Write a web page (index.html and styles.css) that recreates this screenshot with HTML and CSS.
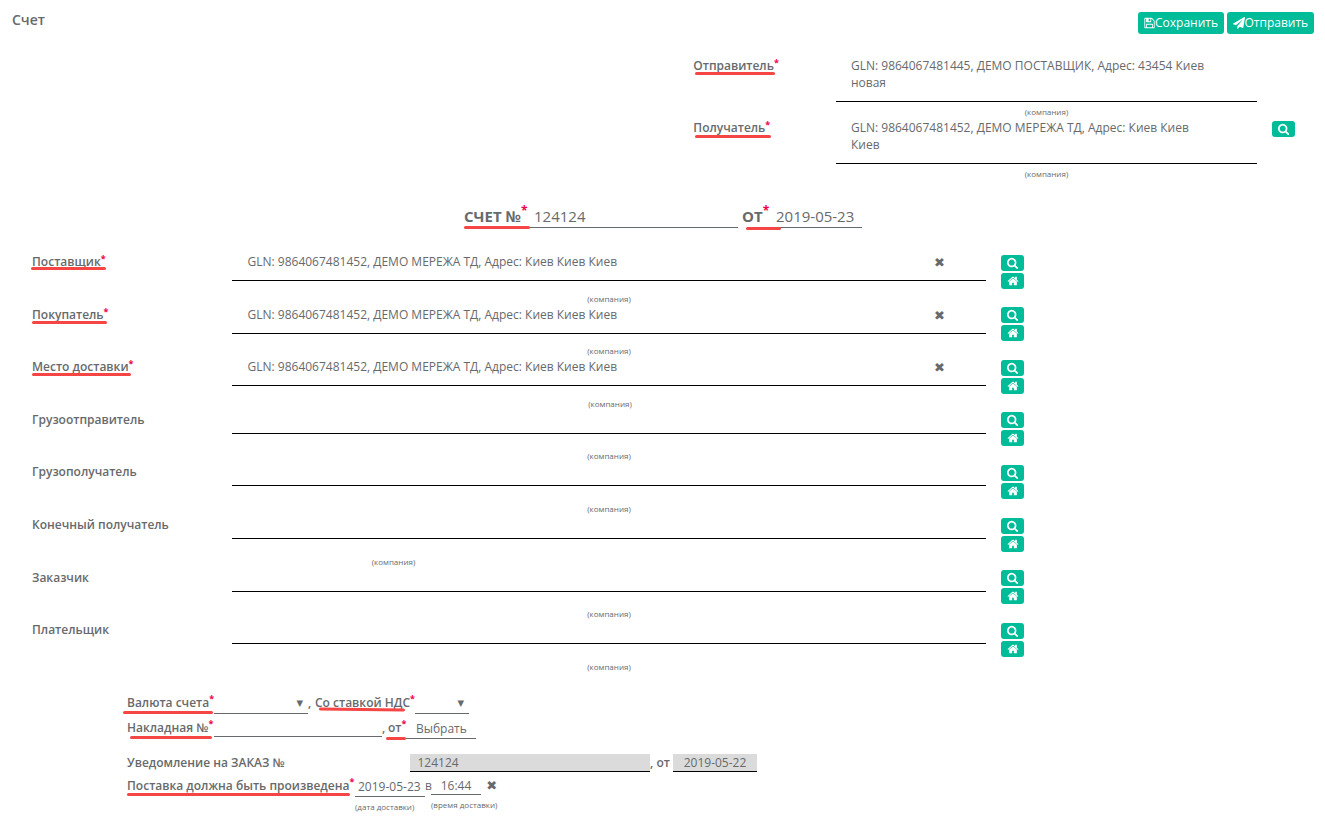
FILE: index.html
```html
<!DOCTYPE html>
<html lang="ru">
<head>
<meta charset="utf-8">
<title>Счет</title>
<link rel="stylesheet" href="styles.css">
</head>
<body>
<svg class="sprite" aria-hidden="true">
  <symbol id="search" viewBox="0 0 1792 1792"><path d="M1152 832q0-185-131.500-316.500t-316.500-131.500-316.500 131.500-131.500 316.500 131.500 316.500 316.500 131.500 316.500-131.500 131.500-316.500zm512 832q0 52-38 90t-90 38q-54 0-90-38l-343-342q-179 124-399 124-143 0-273.500-55.500t-225-150-150-225-55.500-273.500 55.500-273.500 150-225 225-150 273.500-55.500 273.500 55.500 225 150 150 225 55.500 273.500q0 220-124 399l343 343q37 37 37 90z"/></symbol>
  <symbol id="home" viewBox="0 0 1792 1792"><path d="M1472 992v480q0 26-19 45t-45 19h-384v-384h-256v384h-384q-26 0-45-19t-19-45v-480q0-1 .5-3t.5-3l575-474 575 474q1 2 1 6zm223-69l-62 74q-8 9-21 11h-3q-13 0-21-7l-692-577-692 577q-12 8-24 7-13-2-21-11l-62-74q-8-10-7-23.500t11-21.500l719-599q32-26 76-26t76 26l244 204v-195q0-14 9-23t23-9h192q14 0 23 9t9 23v408l219 182q10 8 11 21.500t-7 23.500z"/></symbol>
  <symbol id="plane" viewBox="0 0 1792 1792"><path d="M1764 11q33 24 27 64l-256 1536q-5 29-32 45-14 8-31 8-11 0-24-5l-453-185-242 295q-18 23-49 23-13 0-22-4-19-7-30.500-23.500t-11.500-36.500v-349l864-1059-1069 925-395-162q-37-14-40-55-2-40 32-59l1664-960q15-9 32-9 20 0 36 11z"/></symbol>
  <symbol id="save" viewBox="0 0 1792 1792"><path d="M512 1536h768v-384h-768v384zm896 0h128v-896q0-14-10-38.500t-20-34.500l-281-281q-10-10-34-20t-39-10v416q0 40-28 68t-68 28h-576q-40 0-68-28t-28-68v-416h-128v1280h128v-416q0-40 28-68t68-28h832q40 0 68 28t28 68v416zm-384-928v-320q0-13-9.500-22.500t-22.500-9.500h-192q-13 0-22.500 9.500t-9.500 22.500v320q0 13 9.500 22.500t22.500 9.500h192q13 0 22.500-9.500t9.500-22.500zm640 32v928q0 40-28 68t-68 28h-1344q-40 0-68-28t-28-68v-1344q0-40 28-68t68-28h928q40 0 88 20t76 48l280 280q28 28 48 76t20 88z"/></symbol>
</svg>

<header class="topbar">
  <h1 class="title">Счет</h1>
  <div class="actions">
    <button class="btn"><svg class="icon save"><use href="#save"/></svg>Сохранить</button>
    <button class="btn btn-send"><svg class="icon"><use href="#plane"/></svg>Отправить</button>
  </div>
</header>

<section class="parties">
  <div class="party">
    <div class="label"><span class="name mark m-sender">Отправитель<i class="req">*</i></span></div>
    <div class="field"><div class="value">GLN: 9864067481445, ДЕМО ПОСТАВЩИК, Адрес: 43454 Киев новая</div><div class="hint">(компания)</div></div>
  </div>
  <div class="party">
    <div class="label"><span class="name mark m-receiver">Получатель<i class="req">*</i></span></div>
    <div class="field"><div class="value">GLN: 9864067481452, ДЕМО МЕРЕЖА ТД, Адрес: Киев Киев Киев</div><div class="hint">(компания)</div></div>
    <div class="tools"><button class="mini"><svg class="icon"><use href="#search"/></svg></button></div>
  </div>
</section>

<section class="invoice">
  <span class="inv-label mark m-inv">СЧЕТ №<i class="req">*</i></span><span class="inv-input inv-number">124124</span>
  <span class="inv-label inv-from mark m-from">ОТ<i class="req">*</i></span><span class="inv-input inv-date">2019-05-23</span>
</section>

<section class="companies">
  <div class="row filled">
    <div class="label"><span class="name mark m-supplier">Поставщик<i class="req">*</i></span></div>
    <div class="field"><div class="value"><span>GLN: 9864067481452, ДЕМО МЕРЕЖА ТД, Адрес: Киев Киев Киев</span><span class="clear">✖</span></div><div class="hint">(компания)</div></div>
    <div class="tools"><button class="mini"><svg class="icon"><use href="#search"/></svg></button><button class="mini"><svg class="icon"><use href="#home"/></svg></button></div>
  </div>
  <div class="row filled">
    <div class="label"><span class="name mark m-buyer">Покупатель<i class="req">*</i></span></div>
    <div class="field"><div class="value"><span>GLN: 9864067481452, ДЕМО МЕРЕЖА ТД, Адрес: Киев Киев Киев</span><span class="clear">✖</span></div><div class="hint">(компания)</div></div>
    <div class="tools"><button class="mini"><svg class="icon"><use href="#search"/></svg></button><button class="mini"><svg class="icon"><use href="#home"/></svg></button></div>
  </div>
  <div class="row filled">
    <div class="label"><span class="name mark m-place">Место доставки<i class="req">*</i></span></div>
    <div class="field"><div class="value"><span>GLN: 9864067481452, ДЕМО МЕРЕЖА ТД, Адрес: Киев Киев Киев</span><span class="clear">✖</span></div><div class="hint hint-place">(компания)</div></div>
    <div class="tools"><button class="mini"><svg class="icon"><use href="#search"/></svg></button><button class="mini"><svg class="icon"><use href="#home"/></svg></button></div>
  </div>
  <div class="row">
    <div class="label">Грузоотправитель</div>
    <div class="field"><div class="value"></div><div class="hint">(компания)</div></div>
    <div class="tools"><button class="mini"><svg class="icon"><use href="#search"/></svg></button><button class="mini"><svg class="icon"><use href="#home"/></svg></button></div>
  </div>
  <div class="row">
    <div class="label">Грузополучатель</div>
    <div class="field"><div class="value"></div><div class="hint">(компания)</div></div>
    <div class="tools"><button class="mini"><svg class="icon"><use href="#search"/></svg></button><button class="mini"><svg class="icon"><use href="#home"/></svg></button></div>
  </div>
  <div class="row">
    <div class="label">Конечный получатель</div>
    <div class="field"><div class="value"></div><div class="hint hint-final">(компания)</div></div>
    <div class="tools"><button class="mini"><svg class="icon"><use href="#search"/></svg></button><button class="mini"><svg class="icon"><use href="#home"/></svg></button></div>
  </div>
  <div class="row">
    <div class="label">Заказчик</div>
    <div class="field"><div class="value"></div><div class="hint">(компания)</div></div>
    <div class="tools"><button class="mini"><svg class="icon"><use href="#search"/></svg></button><button class="mini"><svg class="icon"><use href="#home"/></svg></button></div>
  </div>
  <div class="row">
    <div class="label">Плательщик</div>
    <div class="field"><div class="value"></div><div class="hint">(компания)</div></div>
    <div class="tools"><button class="mini"><svg class="icon"><use href="#search"/></svg></button><button class="mini"><svg class="icon"><use href="#home"/></svg></button></div>
  </div>
</section>

<section class="details">
  <div class="line line-currency">
    <span class="name w-currency mark m-currency">Валюта счета<i class="req">*</i></span>
    <span class="select select-currency">▼</span>
    <span class="comma">,</span>
    <span class="name w-vat mark m-vat">Со ставкой НДС<i class="req">*</i></span>
    <span class="select select-vat">▼</span>
  </div>
  <div class="line line-waybill">
    <span class="name w-waybill mark m-waybill">Накладная №<i class="req">*</i></span>
    <span class="input input-waybill"></span>
    <span class="comma comma-waybill">,</span>
    <span class="name w-from mark m-waybill-from">от<i class="req">*</i></span>
    <span class="input input-pick">Выбрать</span>
  </div>
  <div class="line line-order">
    <span class="w-order">Уведомление на ЗАКАЗ №</span>
    <span class="locked locked-number">124124</span>
    <span class="order-from">, от</span>
    <span class="locked locked-date">2019-05-22</span>
  </div>
  <div class="line line-delivery">
    <span class="name w-delivery mark m-delivery">Поставка должна быть произведена<i class="req">*</i></span>
    <div class="stamp"><span class="input stamp-date">2019-05-23</span><span class="hint">(дата доставки)</span></div>
    <span class="in">в</span>
    <div class="stamp"><span class="input stamp-time">16:44</span><span class="hint">(время доставки)</span></div>
    <span class="clear clear-time">✖</span>
  </div>
</section>
</body>
</html>
```
FILE: styles.css
```css
* { box-sizing: border-box; }

body {
  margin: 0;
  width: 1325px;
  height: 820px;
  overflow: hidden;
  background: #fff;
  color: #676a6c;
  font: 12px/17px "Open Sans", "Noto Sans", "DejaVu Sans", sans-serif;
}

.sprite { display: none; }
.icon { display: block; width: 12px; height: 12px; fill: currentColor; flex: none; }

.topbar {
  display: flex;
  justify-content: space-between;
  align-items: flex-start;
  height: 57px;
  padding: 11px 11px 0 12px;
}
.title { margin: 0; font-size: 14px; line-height: 17px; font-weight: 600; }
.actions { display: flex; gap: 3px; padding-top: 1px; }
.btn {
  display: flex;
  align-items: center;
  width: 86px;
  height: 22px;
  padding: 0 0 2px 5px;
  border: 0;
  border-radius: 3px;
  background: #00bc98;
  color: #fff;
  font: inherit;
  white-space: nowrap;
}
.btn .icon { margin-top: 1px; }
.btn .save { width: 13px; margin-right: -1px; }
.btn-send { width: 87px; padding-left: 5.5px; }

.label { font-weight: 600; white-space: nowrap; }
.name { position: relative; display: inline-block; font-weight: 600; white-space: nowrap; }
.req { color: #f0004c; font-style: normal; font-weight: 700; font-size: 9px; line-height: 0; position: relative; top: -4px; }

/* Red strokes below the mandatory labels */
.mark { position: relative; }
.mark::after {
  content: "";
  position: absolute;
  left: 0;
  height: 3px;
  border-radius: 2px;
  background: #f54545;
}
.m-sender::after { left: 2px; top: 15px; width: 80px; }
.m-receiver::after { left: 2px; top: 16px; width: 76px; }
.m-inv::after { left: 0; top: 19px; width: 66px; }
.m-from::after { left: 4px; top: 20px; width: 35px; }
.m-supplier::after { left: -1px; top: 14px; width: 75px; }
.m-buyer::after { left: 0; top: 15px; width: 75px; }
.m-place::after { left: 0; top: 15px; width: 99px; }
.m-currency::after { left: -4px; top: 17px; width: 90px; }
.m-vat::after { left: 4px; top: 14px; width: 86px; transform: rotate(.7deg); }
.m-waybill::after { left: 3px; top: 17px; width: 82px; }
.m-waybill-from::after { left: -2px; top: 18px; width: 20px; }
.m-delivery::after { left: 0; top: 16px; width: 223px; }

.hint { font-size: 8px; line-height: 10px; font-weight: 400; text-align: center; white-space: nowrap; }

.party {
  display: grid;
  grid-template-columns: 142.7px 421px 23px;
  height: 62px;
  margin-left: 693.3px;
}
.party .value { height: 45px; padding: 0 50px 0 15px; border-bottom: 1px solid #000; }
.party .hint { padding-top: 5px; }
.party .tools { padding: 2px 0 0 15px; }

.mini {
  display: flex;
  justify-content: center;
  align-items: center;
  width: 23px;
  height: 16px;
  padding: 0 0 0 1px;
  border: 0;
  border-radius: 3px;
  background: #00bc98;
  color: #fff;
}

.invoice {
  display: flex;
  height: 72px;
  padding: 26px 0 0 464px;
  font-size: 15px;
  line-height: 18px;
  white-space: nowrap;
}
.inv-label { flex: none; width: 66px; height: 21px; font-weight: 700; }
.inv-label .req { font-size: 12px; top: -7px; }
.inv-from { width: 34px; margin-left: 4px; }
.inv-input { height: 21px; border-bottom: 1px solid #676a6c; }
.inv-number { width: 208px; padding-left: 4px; }
.inv-date { width: 86px; }

.companies { padding-left: 32px; }
.row {
  display: grid;
  grid-template-columns: 200px 754px 23px;
  height: 52.6px;
}
.row .value {
  display: flex;
  justify-content: space-between;
  height: 23px;
  padding: 0 41px 0 15.5px;
  border-bottom: 1px solid #000;
}
.row.filled .value { height: 28px; }
.row .hint { padding-top: 17.6px; }
.row.filled .hint { padding-top: 12.6px; }
.row .hint-final { padding-right: 431px; }
.row .hint-place { padding-left: 2px; }
.row .tools { display: flex; flex-direction: column; gap: 2px; padding: 1.7px 0 0 15px; }
.clear { font-family: "DejaVu Sans", sans-serif; font-size: 13px; }
.row .clear { padding-top: 1px; }

.details { padding: 20px 0 0 127px; }
.line { display: flex; white-space: nowrap; font-weight: 600; }
.line > * { flex: none; }
.line .req { top: -5px; }
.line-currency { height: 25px; }
.line-waybill { height: 35px; }
.line-order { height: 23px; }
.w-currency { width: 87px; }
.select {
  height: 20px;
  border-bottom: 1px solid #676a6c;
  text-align: right;
  font: 8.5px/19px "DejaVu Sans", sans-serif;
}
.select-currency { width: 94px; padding-right: 5px; }
.comma { width: 7px; }
.w-vat { width: 100px; }
.select-vat { width: 54px; padding-right: 5px; }
.w-waybill { width: 87px; }
.input { font-weight: 400; border-bottom: 1px solid #676a6c; }
.input-waybill { width: 168px; height: 18px; }
.comma-waybill { width: 6px; }
.w-from { width: 18px; }
.input-pick { width: 70px; height: 20px; padding: 1px 0 0 10px; }
.w-order { width: 283px; }
.locked {
  height: 18px;
  border-bottom: 1px solid #000;
  background: #dbdbdb;
  font-weight: 400;
}
.locked-number { width: 240px; padding-left: 7.500px; }
.order-from { width: 23px; }
.locked-date { width: 84px; text-align: center; }
.w-delivery { width: 228px; }
.stamp { display: flex; flex-direction: column; align-items: flex-start; }
.stamp-date { width: 70px; height: 20px; padding: 1px 0 0 3px; }
.stamp-date + .hint { padding-top: 5px; }
.in { width: 6px; font-weight: 400; }
.stamp-time { width: 50px; height: 18px; text-align: center; }
.stamp-time + .hint { padding-top: 5px; }
.clear-time { margin-left: -11px; }
```
